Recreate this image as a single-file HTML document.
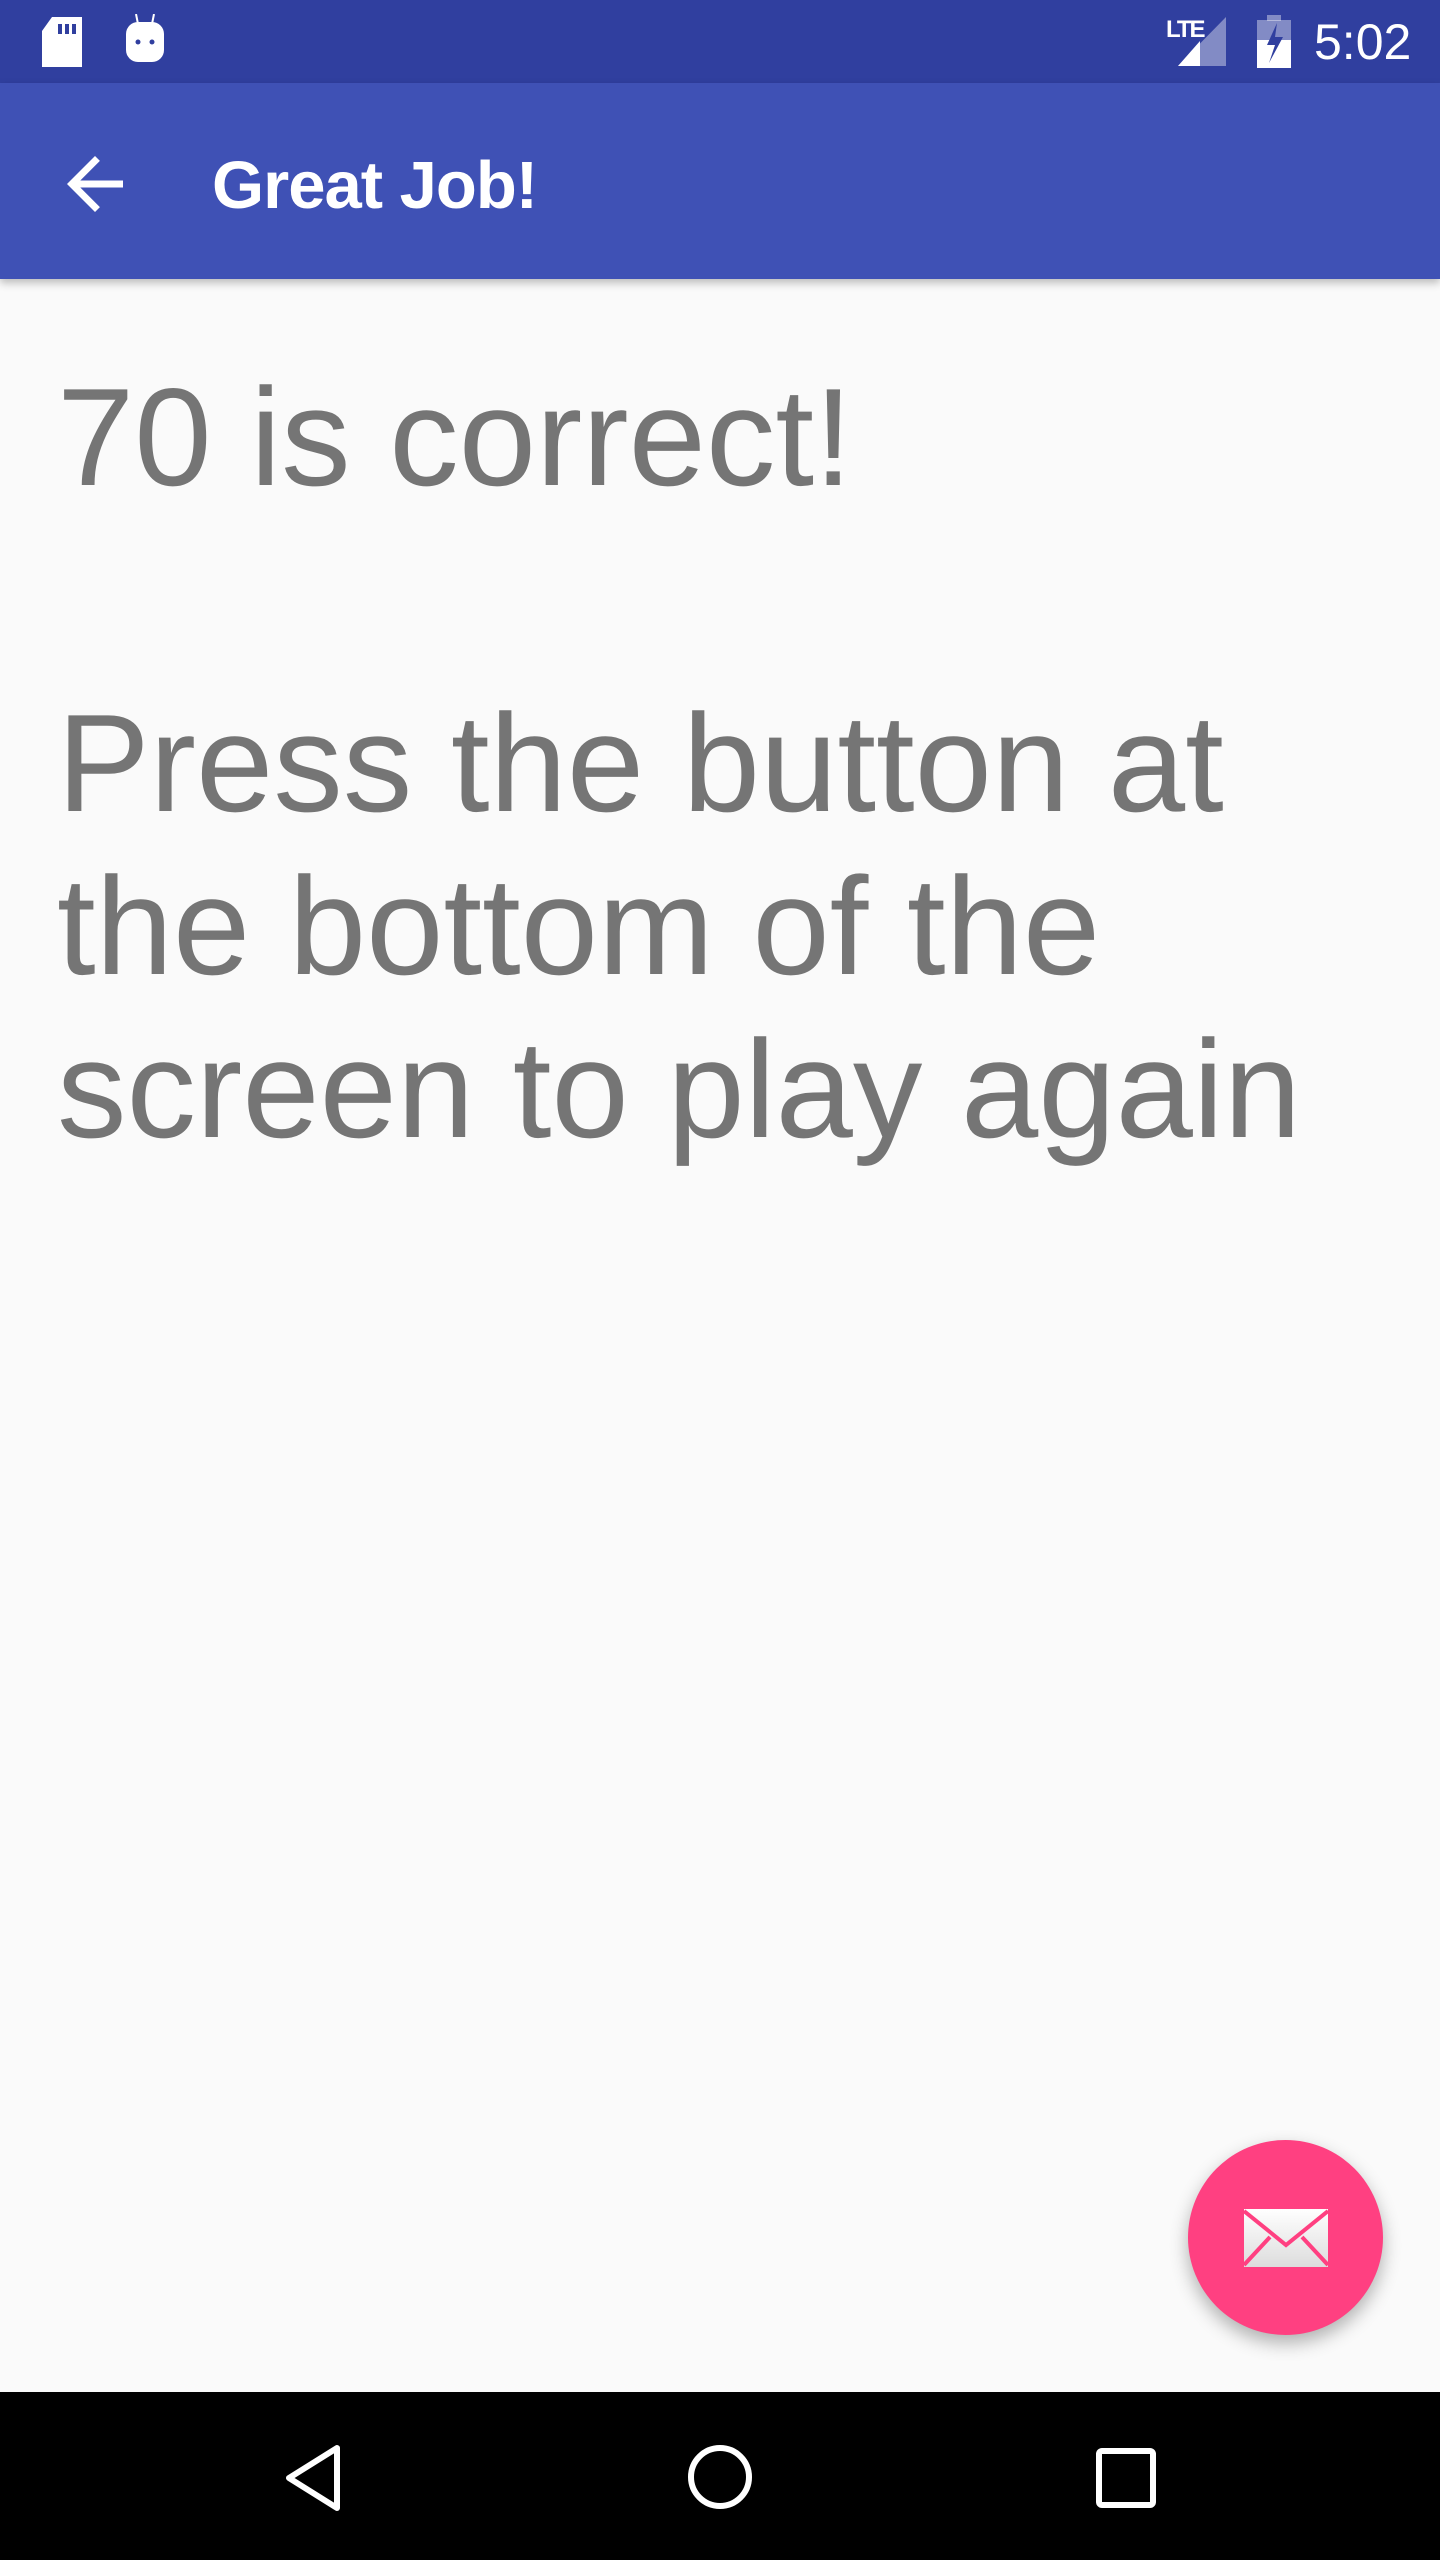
<!DOCTYPE html>
<html><head><meta charset="utf-8"><style>
html,body{margin:0;padding:0;width:1440px;height:2560px;background:#FAFAFA;overflow:hidden;font-family:"Liberation Sans",Roboto,sans-serif;}
#sb{position:absolute;left:0;top:0;width:1440px;height:83px;background:#303F9F;}
#ab{position:absolute;left:0;top:83px;width:1440px;height:196px;background:#3F51B5;box-shadow:0 4px 8px rgba(0,0,0,0.25);}
#title{position:absolute;left:212px;top:63px;color:#fff;font-size:67px;font-weight:bold;line-height:80px;letter-spacing:-1px}
.t{position:absolute;left:57px;color:#757575;font-size:139px;line-height:163px;white-space:nowrap}
#nav{position:absolute;left:0;top:2392px;width:1440px;height:168px;background:#000;}
#fab{position:absolute;left:1188px;top:2140px;width:195px;height:195px;border-radius:50%;background:#FF4081;box-shadow:0 8px 18px rgba(0,0,0,0.3);}
</style></head><body>
<div id="sb">
<svg style="position:absolute;left:42px;top:17px" width="42" height="50"><path d="M10 0H40V50H0V14Z" fill="#fff"/><rect x="16" y="7" width="4" height="10" fill="#303F9F"/><rect x="23" y="7" width="4" height="10" fill="#303F9F"/><rect x="30" y="7" width="4" height="10" fill="#303F9F"/></svg>
<svg style="position:absolute;left:124px;top:14px" width="42" height="50"><path d="M12 0L14 10M30 0L28 10" stroke="#fff" stroke-width="2"/><rect x="2" y="8" width="38" height="40" rx="12" fill="#fff"/><circle cx="14" cy="28" r="2.5" fill="#303F9F"/><circle cx="28" cy="28" r="2.5" fill="#303F9F"/></svg>
<div style="position:absolute;left:1166px;top:16px;color:#fff;font-size:24px;font-weight:bold;letter-spacing:-2px">LTE</div>
<svg style="position:absolute;left:1178px;top:17px" width="50" height="50"><path d="M48 0V49H0Z" fill="rgba(255,255,255,0.4)"/><path d="M22 24V49H0Z" fill="#fff"/></svg>
<svg style="position:absolute;left:1257px;top:15px" width="34" height="53"><rect x="10" y="0" width="14" height="6" fill="rgba(255,255,255,0.4)"/><rect x="0" y="5" width="34" height="48" fill="rgba(255,255,255,0.4)"/><rect x="0" y="25" width="34" height="28" fill="#fff"/><path d="M20 8L10 30H18L12 48L26 22H18Z" fill="#303F9F"/></svg>
<div style="position:absolute;left:1314px;top:12px;color:#fff;font-size:50px;line-height:60px">5:02</div>
</div>
<div id="ab">
<svg style="position:absolute;left:53px;top:59px" width="84" height="84" viewBox="0 0 24 24"><path d="M20 11H7.8l5.6-5.6L12 4l-8 8 8 8 1.4-1.4L7.8 13H20z" fill="#fff"/></svg>
<div id="title">Great Job!</div>
</div>
<div class="t" style="top:356px">70 is correct!</div>
<div class="t" style="top:682px">Press the button at</div>
<div class="t" style="top:845px">the bottom of the</div>
<div class="t" style="top:1008px">screen to play again</div>
<div id="fab"><svg style="position:absolute;left:56px;top:69px" width="84" height="58"><defs><linearGradient id="g" x1="0" y1="0" x2="0" y2="1"><stop offset="0" stop-color="#fff"/><stop offset="1" stop-color="#ddd"/></linearGradient></defs><rect width="84" height="58" fill="url(#g)"/><path d="M0 2L42 36L84 2M0 56L26 28M84 56L58 28" stroke="#FF4081" stroke-width="4" fill="none"/></svg></div>
<div id="nav">
<svg style="position:absolute;left:285px;top:52px" width="60" height="68"><path d="M52 4V64L4 34Z" fill="none" stroke="#fff" stroke-width="6" stroke-linejoin="round"/></svg>
<svg style="position:absolute;left:686px;top:51px" width="68" height="68"><circle cx="34" cy="34" r="29" fill="none" stroke="#fff" stroke-width="6"/></svg>
<svg style="position:absolute;left:1096px;top:56px" width="60" height="60"><rect x="3" y="3" width="54" height="54" rx="3" fill="none" stroke="#fff" stroke-width="6"/></svg>
</div>
</body></html>
